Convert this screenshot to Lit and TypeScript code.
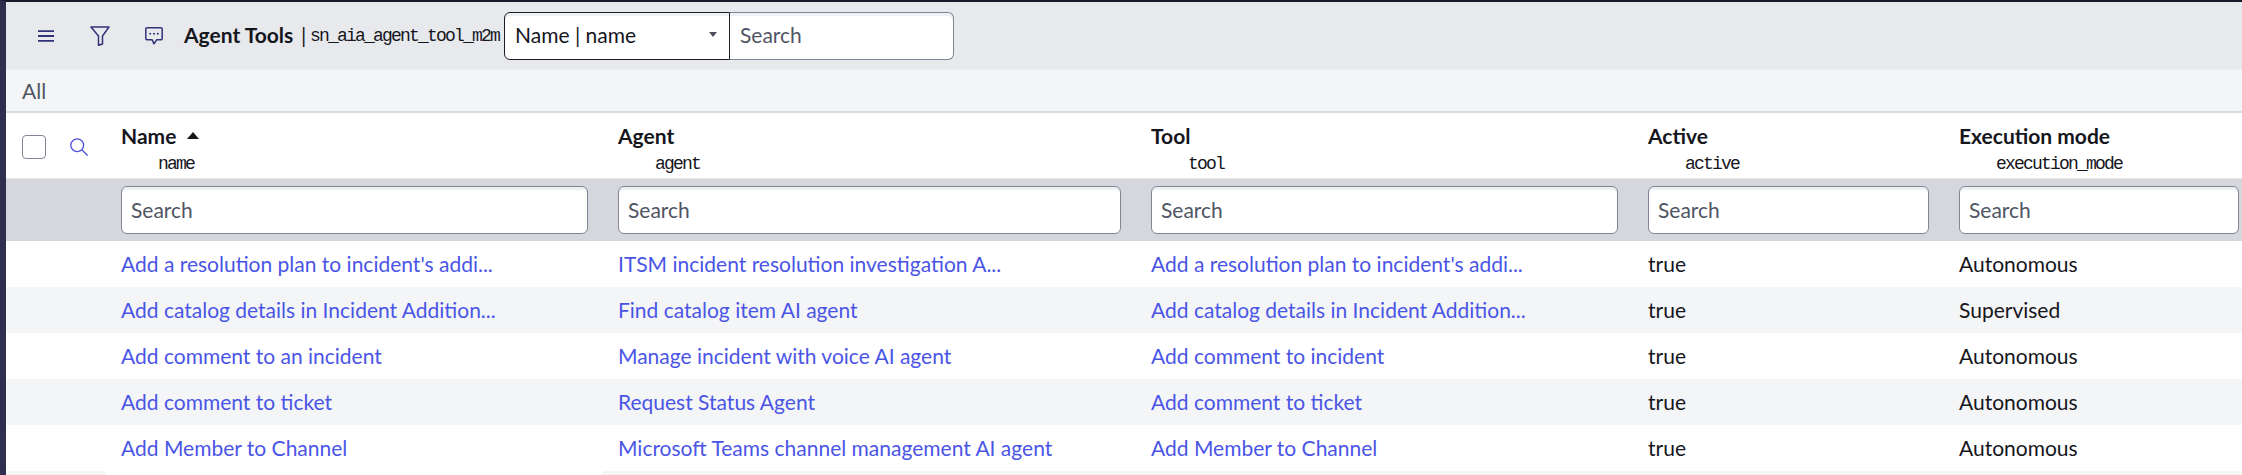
import { LitElement, html, css, svg } from "lit";
import { customElement } from "lit/decorators.js";

const COLS = [
  { label: "Name", field: "name", sort: true },
  { label: "Agent", field: "agent" },
  { label: "Tool", field: "tool" },
  { label: "Active", field: "active" },
  { label: "Execution mode", field: "execution_mode" },
];

const ROWS = [
  ["Add a resolution plan to incident's addi...", "ITSM incident resolution investigation A...", "Add a resolution plan to incident's addi...", "true", "Autonomous"],
  ["Add catalog details in Incident Addition...", "Find catalog item AI agent", "Add catalog details in Incident Addition...", "true", "Supervised"],
  ["Add comment to an incident", "Manage incident with voice AI agent", "Add comment to incident", "true", "Autonomous"],
  ["Add comment to ticket", "Request Status Agent", "Add comment to ticket", "true", "Autonomous"],
  ["Add Member to Channel", "Microsoft Teams channel management AI agent", "Add Member to Channel", "true", "Autonomous"],
];

@customElement("app-root")
export class AppRoot extends LitElement {
  static styles = css`
    :host {
      display: block;
      width: 2242px;
      height: 475px;
      overflow: hidden;
      background: #fff;
      font-family: Lato, "Liberation Sans", sans-serif;
      color: #16161d;
    }
    * { box-sizing: border-box; }
    .frame {
      height: 475px;
      border-top: 2px solid #1a1a2e;
      border-left: 6px solid #2e2e4f;
      display: flex;
      flex-direction: column;
    }
    .toolbar {
      height: 67px;
      flex: none;
      background: #e7e9ed;
      display: flex;
      align-items: center;
    }
    .tb-icon { display: flex; flex: none; color: #32327a; }
    .i-menu { margin-left: 32px; }
    .i-filter { margin-left: 36px; }
    .i-chat { margin-left: 35px; }
    .title { margin-left: 21px; font-size: 21px; font-weight: 700; white-space: nowrap; flex: none; width: 117px; padding-bottom: 2px; }
    .sep { font-size: 21px; font-weight: 400; width: 9px; flex: none; padding-bottom: 2px; }
    .mono { font-family: "Liberation Mono", monospace; font-size: 18px; letter-spacing: -1.8px; }
    .table-name { white-space: nowrap; width: 194px; flex: none; }
    .picker {
      width: 226px;
      height: 48px;
      flex: none;
      background: #fff;
      border: 1px solid #1d1d29;
      border-radius: 6px 0 0 6px;
      box-shadow: inset 0 3px 0 #eef0f3;
      display: flex;
      align-items: center;
      justify-content: space-between;
      padding: 0 12px 2px 10px;
      font-size: 21px;
    }
    .caret { width: 0; height: 0; border: 4px solid transparent; border-top: 5px solid #4b4f5c; border-bottom: 0; }
    .search {
      width: 224px;
      height: 48px;
      flex: none;
      background: #fff;
      border: 1px solid #7f8592;
      border-left: 0;
      border-radius: 0 6px 6px 0;
      box-shadow: inset 0 3px 0 #eef0f3;
      display: flex;
      align-items: center;
      padding: 0 0 2px 10px;
      font-size: 21px;
      color: #4f5564;
    }
    .crumb {
      height: 44px;
      flex: none;
      background: #f4f5f7;
      border-top: 1px solid #eceef1;
      border-bottom: 2px solid #d9dbe0;
      display: flex;
      align-items: center;
      padding-left: 16px;
      font-size: 21px;
      color: #4f5564;
    }
    .grid {
      display: grid;
      grid-template-columns: 115px 497px 533px 497px 311px 283px;
    }
    .head { height: 66px; flex: none; border-bottom: 1px solid #e5e6ea; }
    .head-lead { display: flex; align-items: center; gap: 24px; padding: 8px 0 0 16px; height: 60px; color: #4f52d8; }
    .checkbox { width: 24px; height: 24px; border: 1px solid #7f8592; border-radius: 4px; background: #fff; flex: none; }
    .lead-search { display: flex; }
    .th { padding-top: 11px; }
    .th-label { font-size: 21px; font-weight: 700; line-height: 24px; display: flex; align-items: center; gap: 11px; }
    .sort { width: 0; height: 0; border: 6px solid transparent; border-bottom: 7px solid #16161d; border-top: 0; margin-bottom: 2px; }
    .th-field { line-height: 20px; padding-left: 37px; margin-top: 6px; }
    .filters { height: 62px; flex: none; background: #d5d7dc; align-items: center; }
    .fbox {
      height: 48px;
      margin-right: 30px;
      background: #fff;
      border: 1px solid #7f8592;
      border-radius: 6px;
      box-shadow: inset 0 3px 0 #eef0f3;
      display: flex;
      align-items: center;
      padding: 0 0 2px 9px;
      font-size: 21px;
      color: #4f5564;
    }
    .fbox.last { margin-right: 3px; }
    .row { height: 46px; flex: none; align-items: center; font-size: 21px; white-space: nowrap; padding-bottom: 2px; }
    .row.alt { background: #f4f5f7; }
    .link { color: #4a55e6; }
    .foot { height: 4px; flex: none; display: flex; }
    .foot div { background: #f4f5f7; }
    .f1 { width: 100px; }
    .f2 { width: 497px; background: #fff !important; }
    .f3 { flex: 1; }
  `;

  render() {
    return html`<div class="frame">
      <div class="toolbar">
        <span class="tb-icon i-menu"><svg width="16" height="12" viewBox="0 0 16 12" fill="none" stroke="currentColor" stroke-width="1.8">${svg`<path d="M0 1.2h16M0 6h16M0 10.8h16"/>`}</svg></span>
        <span class="tb-icon i-filter"><svg width="20" height="20" viewBox="0 0 20 20" fill="none" stroke="currentColor" stroke-width="1.5" stroke-linejoin="round">${svg`<path d="M1 1h18L12.5 10v8L8.5 19.3V10z"/>`}</svg></span>
        <span class="tb-icon i-chat"><svg width="18" height="18" viewBox="0 0 18 18" fill="none" stroke="currentColor" stroke-width="1.5" stroke-linejoin="round">${svg`<path d="M2 .8h14A1.2 1.2 0 0 1 17.2 2v9.5a1.2 1.2 0 0 1-1.2 1.2h-4.2L9 16.8l-2-4.1H2A1.2 1.2 0 0 1 .8 11.5V2A1.2 1.2 0 0 1 2 .8z"/><circle cx="5.2" cy="6.8" r="1" fill="currentColor" stroke="none"/><circle cx="9" cy="6.8" r="1" fill="currentColor" stroke="none"/><circle cx="12.8" cy="6.8" r="1" fill="currentColor" stroke="none"/>`}</svg></span>
        <span class="title">Agent Tools</span>
        <span class="sep">|</span>
        <span class="table-name mono">sn_aia_agent_tool_m2m</span>
        <div class="picker"><span>Name | name</span><span class="caret"></span></div>
        <div class="search">Search</div>
      </div>
      <div class="crumb">All</div>
      <div class="grid head">
        <div class="head-lead">
          <span class="checkbox"></span>
          <span class="lead-search"><svg width="18" height="18" viewBox="0 0 18 18" fill="none" stroke="currentColor" stroke-width="1.3">${svg`<circle cx="7.2" cy="7.2" r="6.4"/><path d="M11.8 11.8L17.6 17.6"/>`}</svg></span>
        </div>
        ${COLS.map(
          (c) => html`<div class="th">
            <div class="th-label">${c.label}${c.sort ? html`<span class="sort"></span>` : ""}</div>
            <div class="th-field mono">${c.field}</div>
          </div>`
        )}
      </div>
      <div class="grid filters">
        <div></div>
        ${COLS.map((_, i) => html`<div class="fbox ${i === 4 ? "last" : ""}">Search</div>`)}
      </div>
      ${ROWS.map(
        (r, i) => html`<div class="grid row ${i % 2 ? "alt" : ""}">
          <div></div>
          ${r.map((t, j) => html`<div class="${j < 3 ? "link" : ""}">${t}</div>`)}
        </div>`
      )}
      <div class="foot"><div class="f1"></div><div class="f2"></div><div class="f3"></div></div>
    </div>`;
  }
}
